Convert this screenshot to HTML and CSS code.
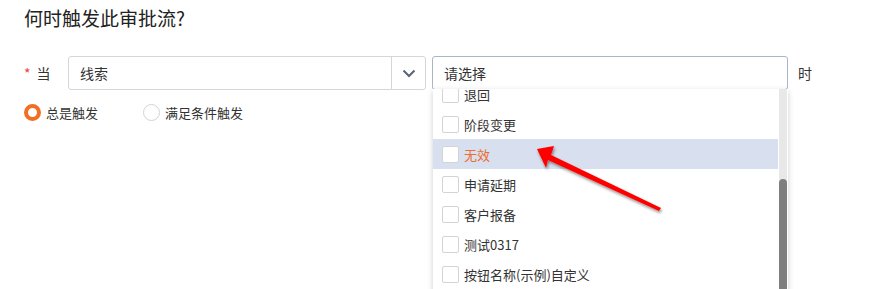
FILE: index.html
```html
<!DOCTYPE html>
<html lang="zh">

<head>
    <meta charset="UTF-8">
    <meta name="viewport" content="width=device-width, initial-scale=1.0">
    <title>审批流</title>
    <link rel="stylesheet" href="styles.css">
</head>

<body>
    <div class="page">
        <h1 class="title">何时触发此审批流?</h1>
        <div class="row">
            <span class="label"><i class="star">*</i>当</span>
            <div class="select">
                <span class="select-text">线索</span>
                <span class="select-btn">
                    <svg width="14" height="9" viewBox="0 0 14 9">
                        <path d="M1.5 1.5 L7 7 L12.5 1.5" fill="none" stroke="#5a6478" stroke-width="2" />
                    </svg>
                </span>
            </div>
            <div class="picker">
                <div class="picker-input">请选择</div>
                <div class="dropdown">
                    <ul class="options">
                        <li><span class="box"></span>退回</li>
                        <li><span class="box"></span>阶段变更</li>
                        <li class="active"><span class="box"></span>无效</li>
                        <li><span class="box"></span>申请延期</li>
                        <li><span class="box"></span>客户报备</li>
                        <li><span class="box"></span>测试0317</li>
                        <li><span class="box"></span>按钮名称(示例)自定义</li>
                    </ul>
                    <div class="scroll"><div class="thumb"></div></div>
                </div>
            </div>
            <span class="suffix">时</span>
        </div>
        <div class="radios">
            <label class="radio"><span class="dot on"></span>总是触发</label>
            <label class="radio"><span class="dot"></span>满足条件触发</label>
        </div>
    </div>
    <!-- 标注用的红色箭头 -->
    <svg class="arrow" width="892" height="289" viewBox="0 0 892 289">
        <defs>
            <filter id="sh" x="-20%" y="-20%" width="140%" height="140%">
                <feDropShadow dx="1" dy="2" stdDeviation="1.5" flood-color="#000" flood-opacity="0.45" />
            </filter>
        </defs>
        <polygon points="537,149 554,146 551,155 661,208 659,211 548,160 546,168" fill="#ff0000" filter="url(#sh)" />
    </svg>
</body>

</html>
```

FILE: styles.css
```css
* {
    box-sizing: border-box;
}

html,
body {
    height: 100%;
}

body {
    position: relative;
    margin: 0;
    background-color: #fff;
    font-family: "Noto Sans CJK SC", "Liberation Sans", sans-serif;
    color: #333;
}

.page {
    padding: 0 24px;
}

.title {
    margin: 0;
    padding-top: 3px;
    height: 56px;
    font-size: 19px;
    font-weight: normal;
    line-height: 30px;
    color: #222;
}

.row {
    display: flex;
    align-items: flex-start;
    height: 34px;
}

.label {
    width: 44px;
    font-size: 14px;
    line-height: 34px;
}

.star {
    margin-right: 6px;
    font-style: normal;
    color: #e9433c;
}

.select {
    display: flex;
    width: 358px;
    height: 34px;
    border: 1px solid #d6d6d6;
    border-radius: 3px;
}

.select-text {
    flex: 1;
    padding-left: 11px;
    font-size: 14px;
    line-height: 32px;
}

.select-btn {
    display: flex;
    align-items: center;
    justify-content: center;
    width: 34px;
    border-left: 1px solid #d6d6d6;
}

.picker {
    position: relative;
    z-index: 2;
    margin-left: 6px;
    width: 356px;
}

.picker-input {
    height: 34px;
    padding-left: 11px;
    border: 1px solid #a9b6c8;
    border-radius: 3px;
    font-size: 14px;
    line-height: 32px;
}

/* 下拉层盖在内容上方 */
.dropdown {
    position: absolute;
    top: 33px;
    left: 1px;
    right: 0;
    height: 210px;
    overflow: hidden;
    background-color: #fff;
    box-shadow: 0 2px 6px rgba(0, 0, 0, 0.2);
}

.options {
    margin: -10px 0 0 0;
    padding: 0 10px 0 0;
    list-style: none;
}

.options li {
    display: flex;
    align-items: center;
    height: 30px;
    padding-left: 9px;
    font-size: 13px;
    color: #333;
}

.options li.active {
    background-color: #d8dfee;
    color: #ec6d2d;
}

.box {
    width: 17px;
    height: 17px;
    margin-right: 5px;
    border: 1px solid #d4d4d4;
    border-radius: 2px;
    background-color: #fff;
}

.scroll {
    position: absolute;
    top: 0;
    right: 1px;
    bottom: 0;
    width: 8px;
    background-color: #e8e8e8;
}

.thumb {
    margin-top: 90px;
    height: 140px;
    border-radius: 4px;
    background-color: #7f7f7f;
}

.suffix {
    margin-left: 10px;
    font-size: 14px;
    line-height: 34px;
}

.radios {
    display: flex;
    padding-top: 13px;
}

.radio {
    display: flex;
    align-items: center;
    width: 119px;
    font-size: 13px;
}

.dot {
    width: 17px;
    height: 17px;
    margin-right: 5px;
    border: 1px solid #d0d3da;
    border-radius: 50%;
}

.dot.on {
    border: 4px solid #f07124;
}

.arrow {
    position: absolute;
    top: 0;
    left: 0;
    z-index: 3;
    pointer-events: none;
}
```
